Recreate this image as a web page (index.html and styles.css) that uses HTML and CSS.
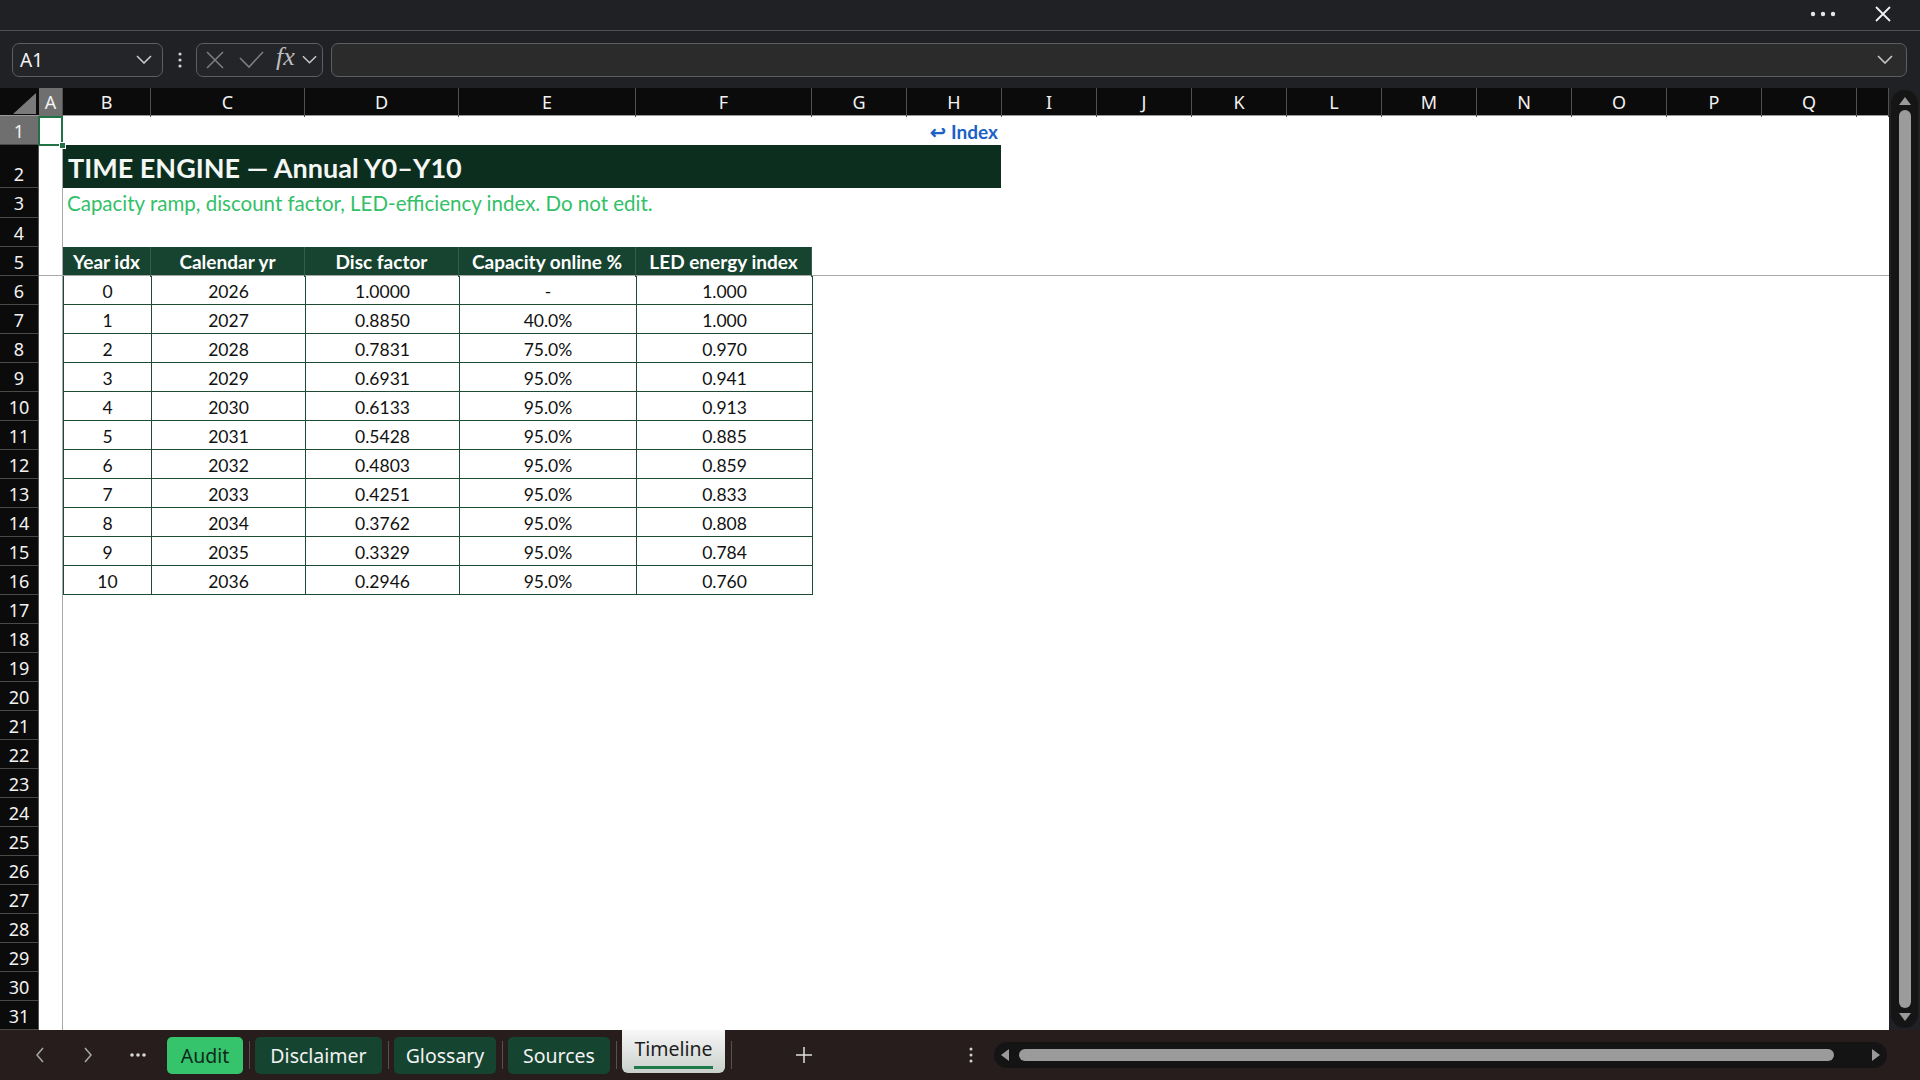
FILE: index.html
```html
<!DOCTYPE html>
<html lang="en">
<head>
    <meta charset="UTF-8">
    <meta name="viewport" content="width=device-width, initial-scale=1.0">
    <title>Timeline</title>
    <link rel="stylesheet" href="styles.css">
</head>
<body>
<div class="app">
    <!-- Barra superior -->
    <div class="titlebar">
        <svg class="more" width="26" height="8" viewBox="0 0 26 8"><circle cx="3" cy="4" r="2.2"/><circle cx="13" cy="4" r="2.2"/><circle cx="23" cy="4" r="2.2"/></svg>
        <svg class="close" width="18" height="18" viewBox="0 0 18 18"><path d="M2 2 L16 16 M16 2 L2 16"/></svg>
    </div>

    <!-- Barra de fórmulas -->
    <div class="formulabar">
        <div class="namebox">
            <span>A1</span>
            <svg class="chev" width="16" height="9" viewBox="0 0 16 9"><path d="M1 1 L8 8 L15 1"/></svg>
        </div>
        <svg class="vdots" width="6" height="16" viewBox="0 0 6 16"><circle cx="3" cy="2" r="1.6"/><circle cx="3" cy="8" r="1.6"/><circle cx="3" cy="14" r="1.6"/></svg>
        <div class="fxbox">
            <svg class="fx-icon" width="18" height="18" viewBox="0 0 18 18"><path d="M1 1 L17 17 M17 1 L1 17"/></svg>
            <svg class="fx-icon check" width="25" height="18" viewBox="0 0 25 18"><path d="M1 7 L10 16 L24 1"/></svg>
            <span class="fx">fx</span>
            <svg class="chev" width="15" height="9" viewBox="0 0 16 9"><path d="M1 1 L8 8 L15 1"/></svg>
        </div>
        <div class="fxinput">
            <svg class="chev" width="16" height="9" viewBox="0 0 16 9"><path d="M1 1 L8 8 L15 1"/></svg>
        </div>
    </div>

    <div class="main">
        <div class="sheet">
            <!-- Cabeçalho de colunas -->
            <div class="colheads">
                <div class="corner"><svg width="24" height="21" viewBox="0 0 24 21"><path d="M23 0 L23 21 L0 21 Z"/></svg></div>
                <div class="ch sel">A</div>
                <div class="ch">B</div>
                <div class="ch">C</div>
                <div class="ch">D</div>
                <div class="ch">E</div>
                <div class="ch">F</div>
                <div class="ch">G</div>
                <div class="ch">H</div>
                <div class="ch">I</div>
                <div class="ch">J</div>
                <div class="ch">K</div>
                <div class="ch">L</div>
                <div class="ch">M</div>
                <div class="ch">N</div>
                <div class="ch">O</div>
                <div class="ch">P</div>
                <div class="ch">Q</div>
                <div class="ch"></div>
            </div>

            <div class="grid-area">
                <!-- Números de linha -->
                <div class="rowheads">
                    <div class="rh sel">1</div>
                    <div class="rh r2">2</div>
                    <div class="rh r3">3</div>
                    <div class="rh">4</div>
                    <div class="rh">5</div>
                    <div class="rh">6</div>
                    <div class="rh">7</div>
                    <div class="rh">8</div>
                    <div class="rh">9</div>
                    <div class="rh">10</div>
                    <div class="rh">11</div>
                    <div class="rh">12</div>
                    <div class="rh">13</div>
                    <div class="rh">14</div>
                    <div class="rh">15</div>
                    <div class="rh">16</div>
                    <div class="rh">17</div>
                    <div class="rh">18</div>
                    <div class="rh">19</div>
                    <div class="rh">20</div>
                    <div class="rh">21</div>
                    <div class="rh">22</div>
                    <div class="rh">23</div>
                    <div class="rh">24</div>
                    <div class="rh">25</div>
                    <div class="rh">26</div>
                    <div class="rh">27</div>
                    <div class="rh">28</div>
                    <div class="rh">29</div>
                    <div class="rh">30</div>
                    <div class="rh">31</div>
                </div>

                <div class="cells">
                    <!-- Painel congelado (linhas 1-5) -->
                    <div class="pane pane-top">
                        <div class="col-a"><div class="cursor"><span class="handle"></span></div></div>
                        <div class="pane-body">
                            <div class="row r1"><span class="index-link">↩ Index</span></div>
                            <div class="row r2 title">TIME ENGINE — Annual Y0–Y10</div>
                            <div class="row r3 subtitle">Capacity ramp, discount factor, LED-efficiency index. Do not edit.</div>
                            <div class="row r4"></div>
                            <div class="tbl thead">
                                <div>Year idx</div>
                                <div>Calendar yr</div>
                                <div>Disc factor</div>
                                <div>Capacity online %</div>
                                <div>LED energy index</div>
                            </div>
                        </div>
                    </div>

                    <!-- Linhas 6 em diante -->
                    <div class="pane pane-bottom">
                        <div class="col-a"></div>
                        <div class="pane-body">
                            <div class="tbl tbody">
                                <div>0</div><div>2026</div><div>1.0000</div><div>-</div><div>1.000</div>
                                <div>1</div><div>2027</div><div>0.8850</div><div>40.0%</div><div>1.000</div>
                                <div>2</div><div>2028</div><div>0.7831</div><div>75.0%</div><div>0.970</div>
                                <div>3</div><div>2029</div><div>0.6931</div><div>95.0%</div><div>0.941</div>
                                <div>4</div><div>2030</div><div>0.6133</div><div>95.0%</div><div>0.913</div>
                                <div>5</div><div>2031</div><div>0.5428</div><div>95.0%</div><div>0.885</div>
                                <div>6</div><div>2032</div><div>0.4803</div><div>95.0%</div><div>0.859</div>
                                <div>7</div><div>2033</div><div>0.4251</div><div>95.0%</div><div>0.833</div>
                                <div>8</div><div>2034</div><div>0.3762</div><div>95.0%</div><div>0.808</div>
                                <div>9</div><div>2035</div><div>0.3329</div><div>95.0%</div><div>0.784</div>
                                <div>10</div><div>2036</div><div>0.2946</div><div>95.0%</div><div>0.760</div>
                            </div>
                        </div>
                    </div>
                </div>
            </div>
        </div>

        <!-- Barra de rolagem vertical -->
        <div class="vscroll">
            <div class="vtrack">
                <svg width="12" height="8" viewBox="0 0 12 8"><path d="M6 0 L12 8 L0 8 Z"/></svg>
                <div class="vthumb"></div>
                <svg width="12" height="8" viewBox="0 0 12 8"><path d="M0 0 L12 0 L6 8 Z"/></svg>
            </div>
        </div>
    </div>

    <!-- Abas das planilhas -->
    <div class="tabbar">
        <svg class="nav" width="10" height="16" viewBox="0 0 10 16"><path d="M8 1 L2 8 L8 15"/></svg>
        <svg class="nav" width="10" height="16" viewBox="0 0 10 16"><path d="M2 1 L8 8 L2 15"/></svg>
        <svg class="nav-more" width="16" height="4" viewBox="0 0 16 4"><circle cx="2" cy="2" r="1.8"/><circle cx="8" cy="2" r="1.8"/><circle cx="14" cy="2" r="1.8"/></svg>
        <div class="tab audit">Audit</div>
        <span class="sep"></span>
        <div class="tab disclaimer">Disclaimer</div>
        <span class="sep"></span>
        <div class="tab glossary">Glossary</div>
        <span class="sep"></span>
        <div class="tab sources">Sources</div>
        <span class="sep"></span>
        <div class="tab active">Timeline</div>
        <span class="sep"></span>
        <svg class="plus" width="18" height="18" viewBox="0 0 18 18"><path d="M9 1 L9 17 M1 9 L17 9"/></svg>
        <svg class="tdots" width="4" height="16" viewBox="0 0 4 16"><circle cx="2" cy="2" r="1.5"/><circle cx="2" cy="8" r="1.5"/><circle cx="2" cy="14" r="1.5"/></svg>
        <div class="htrack">
            <svg width="8" height="12" viewBox="0 0 8 12"><path d="M0 6 L8 0 L8 12 Z"/></svg>
            <div class="hthumb"></div>
            <svg width="8" height="12" viewBox="0 0 8 12"><path d="M0 0 L8 6 L0 12 Z"/></svg>
        </div>
    </div>
</div>
</body>
</html>
```

FILE: styles.css
```css
* {
    box-sizing: border-box;
}
body {
    margin: 0;
    background: #1f2125;
    font-family: "Noto Sans", sans-serif;
    overflow: hidden;
}
.app {
    width: 1920px;
    height: 1080px;
    display: flex;
    flex-direction: column;
}

/* Barra superior */
.titlebar {
    height: 31px;
    border-bottom: 1px solid #4e5054;
    display: flex;
    justify-content: flex-end;
    align-items: center;
    padding-right: 28px;
    gap: 38px;
}
.titlebar .more {
    fill: #e6e6e6;
    margin-top: -2px;
}
.titlebar .close {
    stroke: #f0f0f0;
    stroke-width: 1.8;
    margin-top: -2px;
}

/* Barra de fórmulas */
.formulabar {
    height: 57px;
    display: flex;
    align-items: center;
    padding: 0 13px 0 12px;
}
.namebox,
.fxbox,
.fxinput {
    height: 34px;
    border: 1px solid #5c5e62;
    border-radius: 7px;
    display: flex;
    align-items: center;
}
.chev {
    fill: none;
    stroke: #c8c8c8;
    stroke-width: 1.6;
}
.namebox {
    width: 151px;
    background: #232529;
    padding: 0 10px 0 7px;
    justify-content: space-between;
    color: #f2f2f2;
    font-size: 19px;
}
.vdots {
    fill: #d0d0d0;
    margin: 0 13px 0 14px;
}
.fxbox {
    width: 127px;
    background: #232529;
    padding: 0 0 0 9px;
}
.fx-icon {
    fill: none;
    stroke: #7b7d80;
    stroke-width: 1.6;
}
.fx-icon.check {
    margin-left: 15px;
}
.fx {
    font-family: "Liberation Serif", serif;
    font-style: italic;
    font-size: 26px;
    color: #bdbdbd;
    margin: -5px 7px 0 12px;
}
.fxinput {
    flex: 1;
    margin-left: 8px;
    background: #2b2b2b;
    justify-content: flex-end;
    padding-right: 13px;
}

/* Área da planilha */
.main {
    height: 942px;
    display: flex;
}
.sheet {
    width: 1889px;
    display: flex;
    flex-direction: column;
    background: #ffffff;
}
.colheads {
    height: 28px;
    display: grid;
    grid-template-columns: 39px 24px 88px 154px 154px 177px 176px repeat(11, 95px) 1fr;
    background: #0b0b0b;
    border-bottom: 1px solid #9a9a9a;
}
.corner {
    display: flex;
    align-items: flex-end;
    justify-content: flex-end;
    padding: 0 2px 3px 0;
}
.corner svg {
    fill: #7a7a7a;
}
.ch {
    color: #f2f2f2;
    font-size: 18px;
    line-height: 29px;
    text-align: center;
    border-right: 1px solid #505050;
}
.ch.sel {
    background: #6f6f6f;
}

.grid-area {
    flex: 1;
    display: flex;
}
.rowheads {
    width: 39px;
    background: #0b0b0b;
    border-right: 1px solid #555;
}
.rh {
    height: 29px;
    color: #f2f2f2;
    font-size: 18px;
    line-height: 30px;
    text-align: center;
    border-bottom: 1px solid #4a4a4a;
}
.rh.sel {
    background: #6f6f6f;
}
.rh.r2 {
    height: 43px;
    line-height: 59px;
}
.rh.r3 {
    height: 30px;
    line-height: 31px;
}

.cells {
    flex: 1;
    display: flex;
    flex-direction: column;
}
.pane {
    display: flex;
}
.pane-top {
    height: 160px;
    border-bottom: 1px solid #a8a8a8;
}
.pane-bottom {
    flex: 1;
}
.col-a {
    width: 24px;
    border-right: 1px solid #a8a8a8;
}
.cursor {
    height: 30px;
    margin-left: -1px;
    width: 25px;
    border: 2px solid #217346;
    position: relative;
}
.handle {
    position: absolute;
    right: -5px;
    bottom: -5px;
    width: 7px;
    height: 7px;
    background: #217346;
    border: 1px solid #fff;
}
.pane-body {
    flex: 1;
    font-family: Lato, "Noto Sans", sans-serif;
}
.row {
    width: 938px;
}
.r1 {
    height: 29px;
    text-align: right;
    padding-right: 3px;
}
.index-link {
    color: #1b62c4;
    font-weight: bold;
    font-size: 19px;
    line-height: 31px;
}
.title {
    height: 43px;
    background: #0c2e1f;
    color: #f4f7f4;
    font-weight: bold;
    font-size: 27px;
    line-height: 45px;
    padding-left: 5px;
}
.subtitle {
    height: 30px;
    color: #33c068;
    font-size: 20.5px;
    line-height: 31px;
    padding-left: 4px;
}
.r4 {
    height: 29px;
}

/* Tabela */
.tbl {
    display: grid;
    grid-template-columns: 88px 154px 154px 177px 176px;
    width: 749px;
    text-align: center;
    font-size: 17.5px;
}
.thead {
    height: 28px;
    background: #174430;
    color: #ffffff;
    font-weight: bold;
    font-size: 19px;
    line-height: 30px;
}
.thead div {
    border-right: 1px solid #2e5f47;
}
.tbody {
    color: #111;
    border-left: 1px solid #1d4b34;
}
.tbody div {
    height: 29px;
    line-height: 31px;
    border-right: 1px solid #1d4b34;
    border-bottom: 1px solid #1d4b34;
}

/* Rolagem vertical */
.vscroll {
    flex: 1;
    padding: 2px;
}
.vtrack {
    height: 100%;
    background: #151515;
    border-radius: 14px;
    display: flex;
    flex-direction: column;
    align-items: center;
    padding: 7px 0;
    gap: 5px;
}
.vtrack svg {
    fill: #9a9a9a;
}
.vthumb {
    flex: 1;
    width: 12px;
    background: #9b9b9b;
    border-radius: 6px;
}

/* Abas */
.tabbar {
    flex: 1;
    background: #271d1d;
    display: flex;
    align-items: center;
    padding-left: 35px;
}
.nav {
    fill: none;
    stroke: #a8a8a8;
    stroke-width: 1.5;
    margin-right: 38px;
}
.nav-more {
    fill: #d8d8d8;
    margin: 0 21px 0 -1px;
}
.tab {
    height: 37px;
    margin-top: 1px;
    border-radius: 5px;
    background: #154430;
    color: #f2f2f2;
    font-size: 19.5px;
    line-height: 37px;
    text-align: center;
}
.tab.audit {
    width: 76px;
    background: #35c46c;
    color: #0e2a1b;
}
.tab.disclaimer {
    width: 127px;
}
.tab.glossary {
    width: 102px;
}
.tab.sources {
    width: 102px;
}
.tab.active {
    width: 103px;
    align-self: flex-start;
    height: 43px;
    margin-top: 0;
    border-radius: 0 0 6px 6px;
    background: linear-gradient(#f7f7f7, #c9d0cc);
    color: #1e1e1e;
    line-height: 38px;
    position: relative;
}
.tab.active::after {
    content: "";
    position: absolute;
    left: 12px;
    right: 12px;
    bottom: 4px;
    height: 3px;
    background: #1f7a4a;
}
.sep {
    width: 1px;
    height: 28px;
    margin: 0 5.5px;
    background: #5a5050;
}
.plus {
    stroke: #e0e0e0;
    stroke-width: 1.5;
    margin-left: 58px;
}
.tdots {
    fill: #d0d0d0;
    margin-left: 156px;
}
.htrack {
    margin-left: 21px;
    width: 893px;
    height: 26px;
    background: #141414;
    border-radius: 13px;
    display: flex;
    align-items: center;
    justify-content: space-between;
    padding: 0 7px;
}
.htrack svg {
    fill: #9a9a9a;
}
.hthumb {
    width: 815px;
    height: 12px;
    margin: 0 auto 0 10px;
    background: #9b9b9b;
    border-radius: 6px;
}
```
